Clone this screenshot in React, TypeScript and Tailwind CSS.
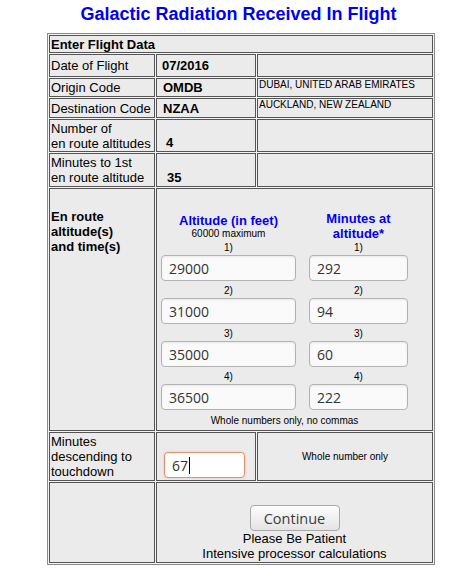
import React from "react";

const altitudes = [
  { n: "1)", alt: "29000", min: "292" },
  { n: "2)", alt: "31000", min: "94" },
  { n: "3)", alt: "35000", min: "60" },
  { n: "4)", alt: "36500", min: "222" },
];

const cell = "border border-[#555] bg-[#ebebeb] p-0";
const inputCls =
  "h-[26px] rounded-[4px] border border-[#b3b3b3] bg-[#fafafa] px-[7px] font-['Open_Sans',sans-serif] text-[14px] text-[#333] shadow-[inset_0_1px_2px_rgba(0,0,0,0.08)] outline-none";

export default function App() {
  return (
    <main className="min-h-screen bg-white font-['Liberation_Sans',Arial,sans-serif] text-[13px] text-black">
      <div className="pl-[47px] pt-[4px]">
        <h1 className="w-[388px] pl-[1px] pr-[6px] text-center text-[18px] font-bold leading-[21px] text-[#0000f0]">
          Galactic Radiation Received In Flight
        </h1>

        <table className="mt-[8px] w-[388px] table-fixed border-separate border-spacing-[1px] border border-[#8a8a8a] bg-[#f4f4f4] leading-[15px]">
          <colgroup>
            <col className="w-[106px]" />
            <col className="w-[100px]" />
            <col />
          </colgroup>
          <tbody>
            <tr>
              <td colSpan={3} className={`${cell} h-[18px] px-[1px] align-middle font-bold`}>
                Enter Flight Data
              </td>
            </tr>
            <tr>
              <td className={`${cell} h-[23px] px-[1px] align-middle`}>Date of Flight</td>
              <td className={`${cell} pl-[5px] align-middle font-bold`}>07/2016</td>
              <td className={cell}></td>
            </tr>
            <tr>
              <td className={`${cell} h-[19px] px-[1px] align-middle`}>Origin Code</td>
              <td className={`${cell} pl-[6px] align-middle font-bold`}>OMDB</td>
              <td className={`${cell} pl-[1px] align-top text-[10px] leading-[12px]`}>
                DUBAI, UNITED ARAB EMIRATES
              </td>
            </tr>
            <tr>
              <td className={`${cell} h-[20px] px-[1px] align-middle`}>Destination Code</td>
              <td className={`${cell} pl-[6px] align-middle font-bold`}>NZAA</td>
              <td className={`${cell} pl-[1px] align-top text-[10px] leading-[12px]`}>
                AUCKLAND, NEW ZEALAND
              </td>
            </tr>
            <tr>
              <td className={`${cell} h-[33px] px-[1px] align-middle`}>
                Number of
                <br />
                en route altitudes
              </td>
              <td className={`${cell} pb-[1px] pl-[9px] align-bottom font-bold`}>4</td>
              <td className={cell}></td>
            </tr>
            <tr>
              <td className={`${cell} h-[34px] px-[1px] align-middle`}>
                Minutes to 1st
                <br />
                en route altitude
              </td>
              <td className={`${cell} pb-[1px] pl-[10px] align-bottom font-bold`}>35</td>
              <td className={cell}></td>
            </tr>
            <tr>
              <td className={`${cell} h-[243px] px-[1px] pt-[20px] align-top font-bold`}>
                En route
                <br />
                altitude(s)
                <br />
                and time(s)
              </td>
              <td colSpan={2} className={`${cell} pl-[4px] pt-[22px] align-top`}>
                <div className="grid w-[247px] grid-cols-[135px_99px] items-center gap-x-[13px] text-center">
                  <div>
                    <div className="font-bold text-[#0000f0]">Altitude (in feet)</div>
                    <div className="text-[10px] leading-[12px]">60000 maximum</div>
                  </div>
                  <div className="font-bold text-[#0000f0]">
                    Minutes at
                    <br />
                    altitude*
                  </div>
                </div>
                {altitudes.map((a, i) => (
                  <div
                    key={a.n}
                    className={`grid w-[247px] grid-cols-[135px_99px] gap-x-[13px] ${i === 0 ? "mt-[1px]" : "mt-[4px]"}`}
                  >
                    <div className="flex flex-col items-center gap-[1px]">
                      <span className="text-[10px] leading-[12px]">{a.n}</span>
                      <input readOnly value={a.alt} className={`${inputCls} w-[135px]`} />
                    </div>
                    <div className="flex flex-col items-center gap-[1px]">
                      <span className="text-[10px] leading-[12px]">{a.n}</span>
                      <input readOnly value={a.min} className={`${inputCls} w-[99px]`} />
                    </div>
                  </div>
                ))}
                <div className="mt-[5px] w-[247px] text-center text-[10px] leading-[12px]">
                  Whole numbers only, no commas
                </div>
              </td>
            </tr>
            <tr>
              <td className={`${cell} h-[49px] px-[1px] align-middle`}>
                Minutes
                <br />
                descending to
                <br />
                touchdown
              </td>
              <td className={`${cell} pb-[2px] pl-[7px] align-bottom`}>
                <div className="flex h-[26px] w-[81px] items-center rounded-[4px] border border-[#e3906b] bg-white px-[7px] font-['Open_Sans',sans-serif] text-[14px] text-[#333] shadow-[0_0_2px_rgba(240,150,110,0.6)]">
                  67
                  <span className="ml-px inline-block h-[17px] w-px bg-black" />
                </div>
              </td>
              <td className={`${cell} text-center align-middle text-[10px] leading-[12px]`}>
                Whole number only
              </td>
            </tr>
            <tr>
              <td className={`${cell} h-[81px]`}></td>
              <td colSpan={2} className={`${cell} pb-[1px] text-center align-bottom`}>
                <button
                  type="button"
                  className="h-[26px] w-[90px] rounded-[4px] border border-[#a9a9a9] bg-gradient-to-b from-[#fdfdfd] to-[#e4e4e4] font-['Open_Sans',sans-serif] text-[14.5px] text-[#3c3c3c]"
                >
                  Continue
                </button>
                <div>Please Be Patient</div>
                <div>Intensive processor calculations</div>
              </td>
            </tr>
          </tbody>
        </table>
      </div>
    </main>
  );
}
